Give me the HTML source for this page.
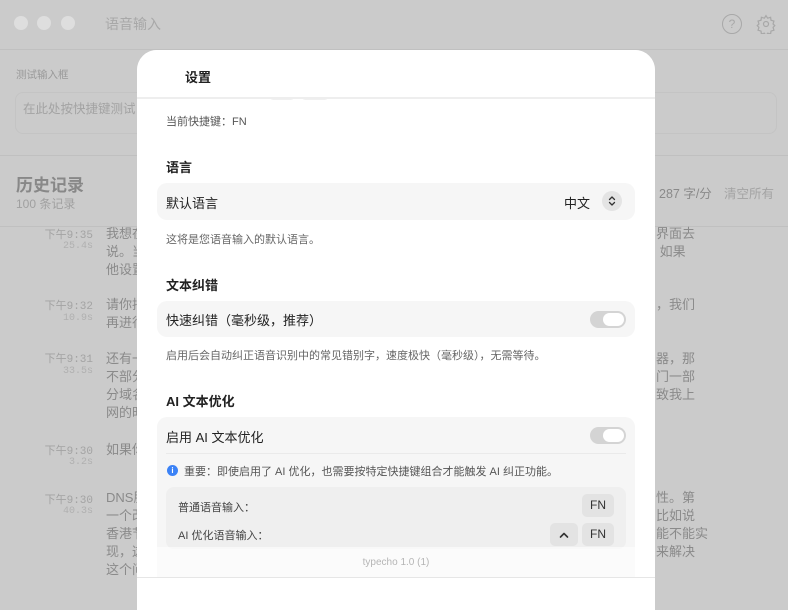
<!DOCTYPE html>
<html><head><meta charset="utf-8"><style>
*{margin:0;padding:0;box-sizing:border-box}
body{width:788px;height:594px;overflow:hidden;background:#cbcbcb;font-family:"Liberation Sans","Noto Sans CJK SC",sans-serif;position:relative}
.a{position:absolute;white-space:nowrap}
.bg{color:#8e8e8e}
.t{color:#a3a3a3;font-family:"Liberation Mono","Noto Sans CJK SC",monospace;font-size:11px;text-align:right;width:80px}
.h{font-size:13px;color:#8a8a8a;line-height:18px}
.m{position:absolute;left:137px;top:50px;width:518px;height:560px;background:#fff;border-radius:20px 20px 0 0;overflow:hidden}
.sec{position:absolute;left:29px;font-size:13px;font-weight:bold;color:#222}
.row{position:absolute;left:20px;width:478px;background:#f6f6f6;border-radius:10px}
.lab{position:absolute;left:9px;font-size:13px;color:#222}
.desc{position:absolute;left:29px;font-size:11px;color:#666}
.tg{position:absolute;width:36px;height:17px;border-radius:9px;background:#d4d4d4}
.tg:after{content:"";position:absolute;right:2px;top:2px;width:21px;height:13px;border-radius:7px;background:#fff}
.key{position:absolute;height:23px;background:#e3e3e3;border-radius:5px;font-size:12px;color:#333;text-align:center;line-height:23px}
</style></head><body>
<div class="a" style="left:14px;top:16px;width:14px;height:14px;border-radius:50%;background:#dedede"></div>
<div class="a" style="left:37px;top:16px;width:14px;height:14px;border-radius:50%;background:#dedede"></div>
<div class="a" style="left:61px;top:16px;width:14px;height:14px;border-radius:50%;background:#dedede"></div>
<div class="a bg" style="left:105px;top:14px;font-size:14px;color:#a8a8a8">语音输入</div>
<div class="a" style="left:722px;top:14px;width:20px;height:20px;border:1.3px solid #a8a8a8;border-radius:50%;font-size:12px;color:#a8a8a8;text-align:center;line-height:18px">?</div>
<svg class="a" style="left:756px;top:14px" width="20" height="20" viewBox="0 0 24 24" fill="none" stroke="#a8a8a8" stroke-width="1.5"><circle cx="12" cy="12" r="3"/><path d="M12 2l2 3 3.5-1 .5 3.5 3.5 1-1 3.5 2 2-2 2 1 3.5-3.5 1-.5 3.5-3.5-1-2 3-2-3-3.5 1-.5-3.5-3.5-1 1-3.5-2-2 2-2-1-3.5 3.5-1 .5-3.5 3.5 1z"/></svg>
<div class="a" style="left:0;top:49px;width:788px;height:1px;background:#c0c0c0"></div>
<div class="a bg" style="left:16px;top:67px;font-size:10.5px;color:#999">测试输入框</div>
<div class="a" style="left:15px;top:92px;width:762px;height:42px;border:1px solid #c4c4c4;border-radius:8px"></div>
<div class="a" style="left:23px;top:98px;font-size:12.5px;color:#a3a3a3">在此处按快捷键测试</div>
<div class="a" style="left:0;top:155px;width:788px;height:1px;background:#c0c0c0"></div>
<div class="a" style="left:16px;top:171px;font-size:17px;font-weight:bold;color:#888">历史记录</div>
<div class="a" style="left:16px;top:195px;font-size:12px;color:#a0a0a0">100 条记录</div>
<div class="a" style="left:659px;top:183px;font-size:12.5px;color:#8a8a8a">287 字/分</div>
<div class="a" style="left:724px;top:183px;font-size:12.5px;color:#a3a3a3">清空所有</div>
<div class="a" style="left:0;top:226px;width:788px;height:1px;background:#c0c0c0"></div>
<div class="a t" style="left:13px;top:226px">下午9:35</div><div class="a t" style="left:13px;top:241px;font-size:10px;color:#b0b0b0">25.4s</div>
<div class="a h" style="left:106px;top:225px">我想在<br>说。当<br>他设置</div>
<div class="a h" style="left:656px;top:225px">界面去<br>&nbsp;如果</div>
<div class="a t" style="left:13px;top:297px">下午9:32</div><div class="a t" style="left:13px;top:313px;font-size:10px;color:#b0b0b0">10.9s</div>
<div class="a h" style="left:106px;top:296px">请你把<br>再进行</div>
<div class="a h" style="left:656px;top:296px">，我们</div>
<div class="a t" style="left:13px;top:350px">下午9:31</div><div class="a t" style="left:13px;top:366px;font-size:10px;color:#b0b0b0">33.5s</div>
<div class="a h" style="left:106px;top:350px">还有一<br>不部分<br>分域名<br>网的时</div>
<div class="a h" style="left:656px;top:350px">器，那<br>门一部<br>致我上</div>
<div class="a t" style="left:13px;top:442px">下午9:30</div><div class="a t" style="left:13px;top:457px;font-size:10px;color:#b0b0b0">3.2s</div>
<div class="a h" style="left:106px;top:441px">如果你</div>
<div class="a t" style="left:13px;top:491px">下午9:30</div><div class="a t" style="left:13px;top:506px;font-size:10px;color:#b0b0b0">40.3s</div>
<div class="a h" style="left:106px;top:489px">DNS服<br>一个改<br>香港节<br>现，这<br>这个问</div>
<div class="a h" style="left:656px;top:489px">性。第<br>比如说<br>能不能实<br>来解决</div>
<div class="m">
  <div class="a" style="left:131px;top:36px;width:28px;height:14px;border-radius:6px;background:#f0f0f0"></div>
  <div class="a" style="left:163px;top:36px;width:30px;height:14px;border-radius:6px;background:#f0f0f0"></div>
  <div class="a" style="left:0;top:0;width:518px;height:47px;background:#fff"></div>
  <div class="a" style="left:48px;top:17px;font-size:13px;font-weight:bold;color:#222">设置</div>
  <div class="a" style="left:0;top:47px;width:518px;height:2px;background:#eee"></div>
  <div class="desc" style="top:63px;color:#555">当前快捷键：FN</div>
  <div class="sec" style="top:107px">语言</div>
  <div class="row" style="top:133px;height:37px">
    <div class="lab" style="top:10px">默认语言</div>
    <div class="a" style="left:407px;top:10px;font-size:13px;color:#222">中文</div>
    <svg class="a" style="left:445px;top:8px" width="20" height="20" viewBox="0 0 20 20"><circle cx="10" cy="10" r="10" fill="#e4e4e4"/><path d="M7.5 8.5L10 6l2.5 2.5M7.5 11.5L10 14l2.5-2.5" fill="none" stroke="#333" stroke-width="1.3" stroke-linecap="round" stroke-linejoin="round"/></svg>
  </div>
  <div class="desc" style="top:181px">这将是您语音输入的默认语言。</div>
  <div class="sec" style="top:225px">文本纠错</div>
  <div class="row" style="top:251px;height:36px">
    <div class="lab" style="top:9px">快速纠错（毫秒级，推荐）</div>
    <div class="tg" style="left:433px;top:10px"></div>
  </div>
  <div class="desc" style="top:297px">启用后会自动纠正语音识别中的常见错别字，速度极快（毫秒级），无需等待。</div>
  <div class="sec" style="top:341px">AI 文本优化</div>
  <div class="row" style="top:367px;height:170px">
    <div class="lab" style="top:10px">启用 AI 文本优化</div>
    <div class="tg" style="left:433px;top:10px"></div>
    <div class="a" style="left:9px;top:36px;width:460px;height:1px;background:#eaeaea"></div>
    <div class="a" style="left:10px;top:48px;width:11px;height:11px;border-radius:50%;background:#3b82f6;color:#fff;font-size:8px;text-align:center;line-height:11px;font-weight:bold">i</div>
    <div class="a" style="left:27px;top:46px;font-size:11px;color:#555">重要：即使启用了 AI 优化，也需要按特定快捷键组合才能触发 AI 纠正功能。</div>
    <div class="a" style="left:9px;top:70px;width:460px;height:62px;background:#efefef;border-radius:8px">
      <div class="a" style="left:12px;top:12px;font-size:11px;color:#444">普通语音输入：</div>
      <div class="key" style="left:416px;top:7px;width:32px">FN</div>
      <div class="a" style="left:12px;top:40px;font-size:11px;color:#444">AI 优化语音输入：</div>
      <div class="key" style="left:384px;top:36px;width:28px"><svg width="10" height="8" viewBox="0 0 10 8" style="vertical-align:middle"><path d="M1.5 6L5 2.5 8.5 6" fill="none" stroke="#333" stroke-width="1.6" stroke-linecap="round" stroke-linejoin="round"/></svg></div>
      <div class="key" style="left:416px;top:36px;width:32px">FN</div>
    </div>
  </div>
  <div class="a" style="left:0;top:497px;width:518px;height:30px;background:rgba(255,255,255,.55)"></div>
  <div class="a" style="left:0;top:507px;width:518px;text-align:center;font-size:10px;color:#b5b5b5">typecho 1.0 (1)</div>
  <div class="a" style="left:0;top:527px;width:518px;height:1px;background:#e6e6e6"></div>
  <div class="a" style="left:0;top:528px;width:518px;height:40px;background:#fff"></div>
</div>
</body></html>
